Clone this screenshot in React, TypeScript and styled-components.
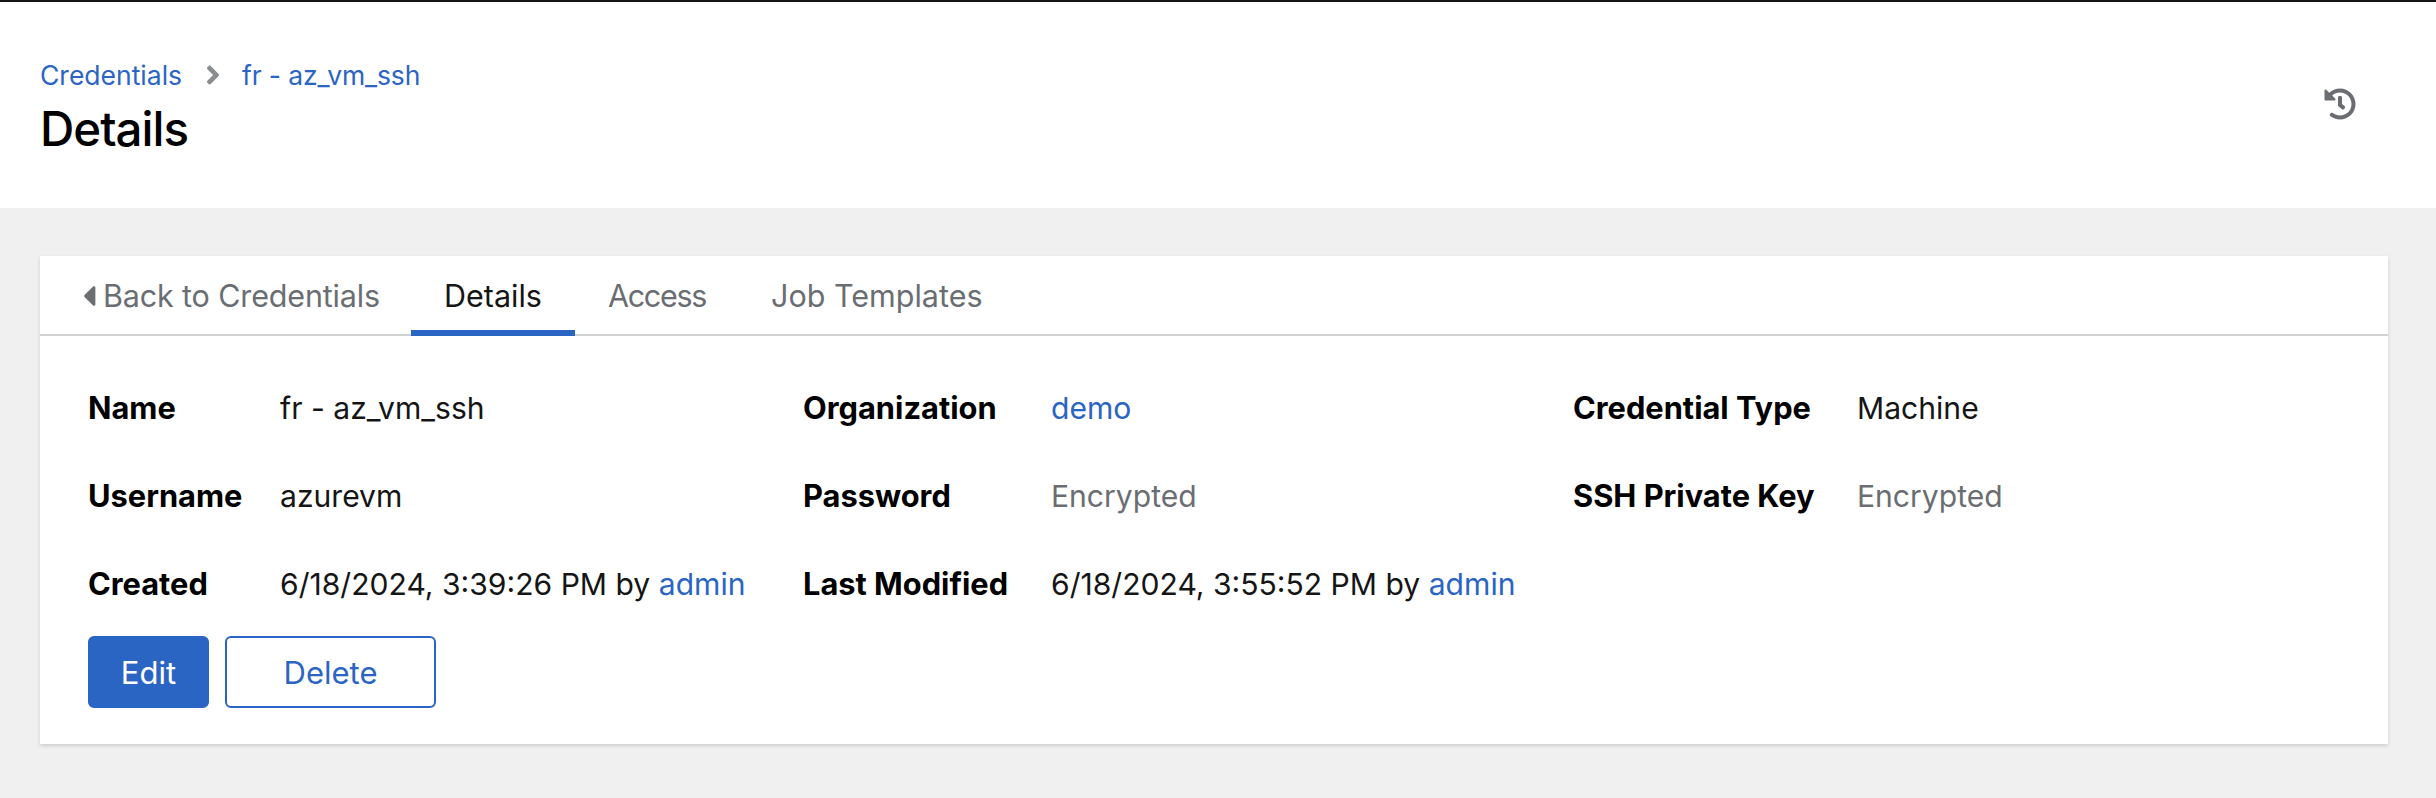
import styled, { createGlobalStyle } from 'styled-components';
import { FaAngleRight, FaCaretLeft, FaHistory } from 'react-icons/fa';

const GlobalStyle = createGlobalStyle`
  html, body {
    margin: 0;
    padding: 0;
    background: #f0f0f0;
    font-family: Inter, "Liberation Sans", sans-serif;
    color: #151515;
  }
`;

const Page = styled.div`
  min-height: 798px;
  background: #f0f0f0;
  border-top: 2px solid #151515;
  box-sizing: border-box;
`;

const Header = styled.header`
  background: #fff;
  height: 206px;
  box-sizing: border-box;
  padding: 55px 80px 0 40px;
  display: flex;
  justify-content: space-between;
  align-items: flex-start;
`;

const Breadcrumb = styled.nav`
  display: flex;
  align-items: center;
  height: 36px;
  font-size: 26.5px;
  color: #2b65c4;

  svg {
    color: #8a8d90;
    font-size: 30px;
    margin: 0 14px 0 16px;
  }
`;

const Crumb = styled.span<{ $tight?: boolean }>`
  letter-spacing: ${(p) => (p.$tight ? '-0.15px' : '0')};
`;

const Title = styled.h1`
  margin: 8px 0 0;
  font-size: 47.5px;
  line-height: 56px;
  font-weight: 500;
  letter-spacing: -1px;
  color: #000;
`;

const HistoryButton = styled.div`
  color: #6a6e73;
  font-size: 32px;
  margin-top: 31px;
  display: flex;
`;

const Main = styled.main`
  padding: 48px 48px 0 40px;
`;

const Card = styled.section`
  background: #fff;
  height: 488px;
  box-shadow: 0 2px 4px rgba(3, 3, 3, 0.14);
`;

const Tabs = styled.div`
  display: flex;
  height: 80px;
  box-sizing: border-box;
  border-bottom: 2px solid #d2d2d2;
`;

const Tab = styled.div<{ $active?: boolean; $spacing?: number; $left?: number; $right?: number }>`
  height: 80px;
  box-sizing: border-box;
  padding: 5px ${(p) => p.$right ?? 33}px 0 ${(p) => p.$left ?? 33}px;
  display: flex;
  align-items: center;
  font-size: 30.5px;
  letter-spacing: ${(p) => p.$spacing ?? 0}px;
  color: ${(p) => (p.$active ? '#151515' : '#6a6e73')};
  border-bottom: 6px solid ${(p) => (p.$active ? '#2b65c4' : 'transparent')};
  margin-bottom: -2px;

  svg {
    font-size: 34px;
    margin-right: -3px;
    margin-left: -8px;
  }
`;

const Body = styled.div`
  padding: 52px 48px 0;
`;

const DetailGrid = styled.dl`
  margin: 0;
  display: grid;
  grid-template-columns: 192px 523px 248px 522px 284px 1fr;
  grid-auto-rows: 88px;
  font-size: 30.1px;
  line-height: 40px;
`;

const Label = styled.dt`
  font-weight: 700;
  font-size: 30.8px;
  color: #000;
`;

const Value = styled.dd<{ $muted?: boolean }>`
  margin: 0;
  color: ${(p) => (p.$muted ? '#6a6e73' : '#151515')};
`;

const Link = styled.a`
  color: #2b65c4;
`;

const Actions = styled.div`
  display: flex;
  gap: 16px;
  margin-top: -16px;
`;

const Button = styled.button<{ $primary?: boolean; $width: number }>`
  width: ${(p) => p.$width}px;
  height: 72px;
  border-radius: 6px;
  border: 2px solid #2b65c4;
  background: ${(p) => (p.$primary ? '#2b65c4' : '#fff')};
  color: ${(p) => (p.$primary ? '#fff' : '#2b65c4')};
  font-family: inherit;
  font-size: 31px;
  padding: 0;
`;

export default function App() {
  return (
    <Page>
      <GlobalStyle />
      <Header>
        <div>
          <Breadcrumb>
            <Crumb>Credentials</Crumb>
            <FaAngleRight />
            <Crumb $tight>fr - az_vm_ssh</Crumb>
          </Breadcrumb>
          <Title>Details</Title>
        </div>
        <HistoryButton>
          <FaHistory />
        </HistoryButton>
      </Header>
      <Main>
        <Card>
          <Tabs>
            <Tab $left={40} $right={31} $spacing={-0.15}>
              <FaCaretLeft />
              Back to Credentials
            </Tab>
            <Tab $active>Details</Tab>
            <Tab $right={32} $spacing={-1.3}>Access</Tab>
            <Tab>Job Templates</Tab>
          </Tabs>
          <Body>
            <DetailGrid>
              <Label>Name</Label>
              <Value>fr - az_vm_ssh</Value>
              <Label>Organization</Label>
              <Value><Link>demo</Link></Value>
              <Label>Credential Type</Label>
              <Value>Machine</Value>
              <Label>Username</Label>
              <Value>azurevm</Value>
              <Label>Password</Label>
              <Value $muted>Encrypted</Value>
              <Label>SSH Private Key</Label>
              <Value $muted>Encrypted</Value>
              <Label>Created</Label>
              <Value>6/18/2024, 3:39:26 PM by <Link>admin</Link></Value>
              <Label>Last Modified</Label>
              <Value>6/18/2024, 3:55:52 PM by <Link>admin</Link></Value>
            </DetailGrid>
            <Actions>
              <Button $primary $width={121}>Edit</Button>
              <Button $width={211}>Delete</Button>
            </Actions>
          </Body>
        </Card>
      </Main>
    </Page>
  );
}
